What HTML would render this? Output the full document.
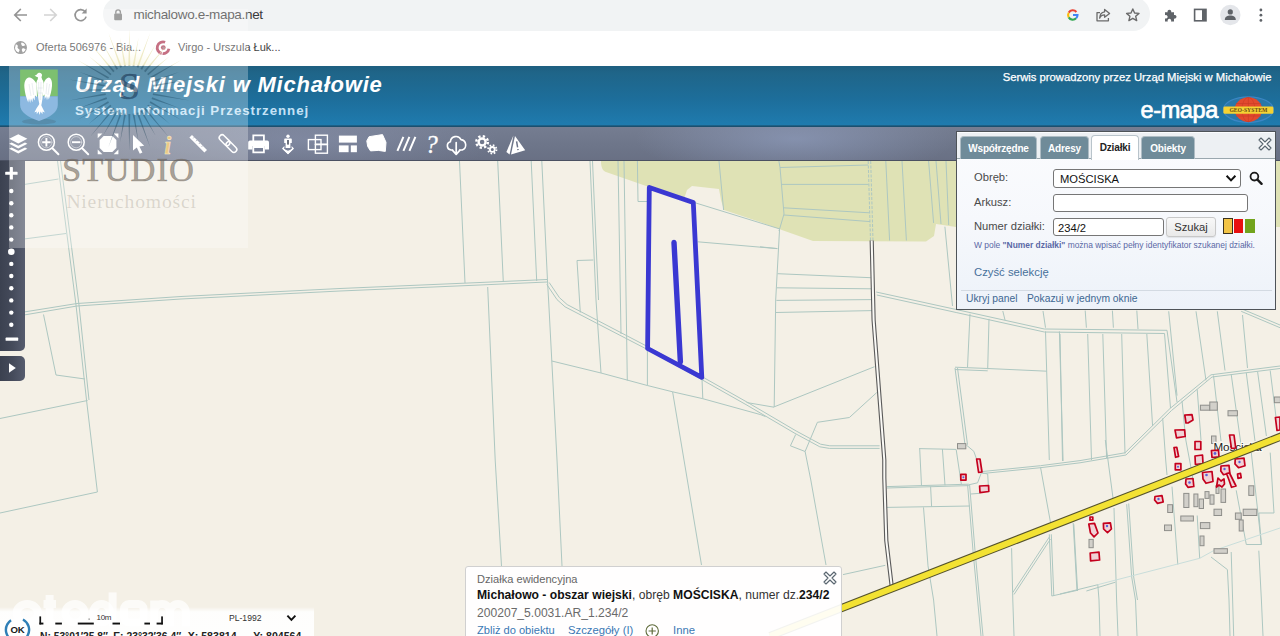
<!DOCTYPE html>
<html lang="pl">
<head>
<meta charset="utf-8">
<title>e-mapa Michałowo</title>
<style>
*{box-sizing:border-box;}
html,body{margin:0;padding:0;}
body{width:1280px;height:636px;overflow:hidden;position:relative;background:#fff;font-family:"Liberation Sans",sans-serif;}
.abs{position:absolute;}
/* browser chrome */
#ctop{left:0;top:0;width:1280px;height:31px;background:#fff;}
#pill{left:103px;top:-3px;width:1047px;height:34px;border-radius:17px;background:#f1f3f4;}
#url{left:133.5px;top:7.3px;font-size:13.5px;color:#3a3a3a;letter-spacing:-0.33px;white-space:nowrap;}
#url b{font-weight:normal;}
#bm{left:0;top:31px;width:1280px;height:35px;background:#fff;}
.bmt{top:41px;font-size:11px;color:#444;white-space:nowrap;}
/* header */
#hdr{left:0;top:65.5px;width:1280px;height:61.5px;background:linear-gradient(180deg,#1e5f80 0%,#1f6589 12%,#1d6e9b 55%,#1f7bae 96%,#1b506f 98.5%,#1b506f 100%);}
#t1{left:75px;top:71.5px;font-size:22px;font-weight:bold;font-style:italic;color:#fff;white-space:nowrap;letter-spacing:0.78px;}
#t2{left:75px;top:103px;font-size:13.3px;font-weight:bold;color:#c4e2f6;white-space:nowrap;letter-spacing:0.95px;}
#srv{right:8.5px;top:71px;-webkit-text-stroke:0.25px #fff;font-size:11.26px;color:#fff;white-space:nowrap;}
#emapa{left:1140.5px;top:96.5px;font-size:23.5px;color:#fff;white-space:nowrap;letter-spacing:-0.38px;-webkit-text-stroke:0.7px #fff;}
/* toolbar */
#tb{left:0;top:127px;width:1280px;height:34px;background:radial-gradient(ellipse 160px 40px at 795px 12px,rgba(150,165,200,0.55),rgba(150,165,200,0) 100%),radial-gradient(ellipse 200px 40px at 300px 14px,rgba(150,160,190,0.4),rgba(150,160,190,0) 100%),linear-gradient(180deg,#757d91 0%,#6d7589 60%,#697084 100%);border-bottom:1.5px solid #4b5162;}
/* map */
#map{left:0;top:161px;width:1280px;height:475px;background:#f4f0e6;}
#zoomctl{left:0;top:161px;width:24.8px;height:189.6px;background:linear-gradient(90deg,#3b4150 0%,#454b5b 50%,#565c6e 100%);border-radius:0 0 5px 0;}
#playctl{left:0;top:356px;width:24.8px;height:24.8px;background:linear-gradient(90deg,#3b4150 0%,#454b5b 50%,#565c6e 100%);border-radius:0 5px 5px 0;}
/* panel */
#panel{left:955.5px;top:131px;width:320.5px;height:178.5px;background:linear-gradient(180deg,#fbfcfe 0%,#f6f8fc 50%,#edf2f9 100%);border:1.5px solid #4e5358;}
.tab{top:135.5px;height:23px;background:#6f8b99;border:1px solid #aebcc4;border-bottom:none;border-radius:4px 4px 0 0;color:#fff;font-size:10px;font-weight:bold;text-align:center;line-height:23px;letter-spacing:-0.15px;}
.tab.act{background:#fff;color:#222;top:135px;height:24.5px;border-color:#b9c4cb;}
.inp{background:#fff;border:1px solid #767676;border-radius:3px;font-size:11.2px;color:#111;white-space:nowrap;}
.lbl{font-size:11.2px;color:#4a4a4a;white-space:nowrap;}
.lnk{font-size:10.3px;color:#3d6792;white-space:nowrap;}
/* popup */
#pop{left:465px;top:566px;width:377px;height:80px;background:rgba(255,255,255,0.93);border:1px solid #d0d0d0;border-radius:3px;}
/* coords */
#coord{left:0;top:606.5px;width:313.5px;height:30px;background:linear-gradient(180deg,rgba(255,255,255,0) 0%,rgba(255,255,255,0.9) 16%,rgba(255,255,255,0.93) 100%);}
/* watermark */
#wm{left:9px;top:9px;width:239px;height:239px;background:rgba(255,255,255,0.28);}
</style>
</head>
<body>
<!-- MAP -->
<div id="map" class="abs">
<svg id="mapsvg" width="1280" height="475" viewBox="0 161 1280 475">
<!-- forest -->
<path d="M601,161 C601,168 603,171 606,172 L649,187 L684,199 L687,190 L692,186 L719,189 L721,200 L724,210 L760,222 L779,229 L813,241 L926,241.5 L934,236 L936,224 L956,227 L1280,227 L1280,161 Z" fill="#dfe2b5"/>
<g fill="none" stroke="#adc7c1" stroke-width="1">
<!-- far left -->
<path d="M57.5,161 L76,305 L86.5,400 L97.4,492 L0,513"/>
<path d="M60.5,161 L79,305 L89,400"/>
<path d="M24,315 L77,306 L181,299 L340,291 L480,285 L547,282"/>
<path d="M24,312 L77,303.5 L181,296.5 L340,288.5 L480,282.5 L547,279.5"/>
<path d="M24,184.5 L58.5,179"/>
<path d="M24,239 L66,233.5"/>
<path d="M459.5,161 L465,283"/>
<path d="M43.5,314.5 L56,375 L85,379"/>
<path d="M0,418.5 L87.5,400.5"/>
<!-- middle-left verticals -->
<path d="M497.7,161 L503.3,282"/>
<path d="M531.2,161 L536.7,281"/>
<path d="M541.8,161 L547.5,281 L548.6,300 L557,460"/>
<path d="M590,161 L596,300 L601,373"/>
<path d="M592.5,161 L598.5,300"/>
<path d="M618,161 L621,334"/>
<path d="M624,161 L627.3,380.5"/>
<path d="M637.4,161 L638,201.5 L647.5,201.5"/>
<path d="M719,161 L723.6,210"/>
<path d="M487.7,287 L495.2,460 L501.5,566"/>
<path d="M557,460 L562,566"/>
<path d="M577,260.5 L593.3,260"/>
<path d="M577,260.5 L580.3,312.5"/>
<!-- diagonal double road through parcel -->
<path d="M546.8,284.5 L557,299.6 L565,306.8 L646.8,349.2 L701.4,379.4 L746,404.6 L795,433.4 L819.8,446.8 L829.4,448.4 L879.6,448.4"/>
<path d="M549.2,282.5 L559.4,297.6 L567.2,304.6 L648,346.8 L702.6,377 L747.2,402.2 L796.2,431 L820.6,444.2 L829.8,445.8 L879.6,445.8"/>
<path d="M551.8,361 L601,373 L647.4,385.5 L672.6,391.8 L702.8,398.7 L760.8,414.7 L765.5,416.6"/>
<path d="M647.4,349 L647.4,385.5"/>
<path d="M702,379 L702.8,398.6"/>
<path d="M672.6,391.8 L684,460 L701.5,565"/>
<!-- right of parcel -->
<path d="M691,201.5 L780,229"/>
<path d="M697.7,241.8 L777,248.6"/>
<path d="M779.5,230 L775.7,300 L774.2,407"/>
<path d="M746.6,402.5 L774,407.2"/>
<path d="M760,246.8 L777.6,248.6"/>
<path d="M777.6,273.7 L870.7,277.7"/>
<path d="M777,287.8 L871,288.8"/>
<path d="M776.4,300.4 L871.5,299.6"/>
<path d="M775.6,312.5 L872,310.6"/>
<path d="M773.8,407 L874.5,366.7"/>
<!-- forest internal -->
<path d="M778.9,161 L780,167.5 L784,214 L779,231"/>
<path d="M780,167.5 L868.2,165"/>
<path d="M782,184.4 L868.5,184.4"/>
<path d="M783.5,207.8 L869.5,212.8"/>
<path d="M784,215 L870,221.6"/>
<path d="M868.2,161 L870.5,240.5" stroke-dasharray="3 1.5"/>
<path d="M870.7,161 L873,240.5" stroke-dasharray="3 1.5"/>
<path d="M885.8,161 L889.6,240.5"/>
<path d="M902,161 L906.4,240.5"/>
<path d="M928.6,161 L933.6,223"/>
<path d="M936,161 L941,224"/>
<path d="M946,161 L948.7,225"/>
<path d="M944.9,226.7 L952.5,306"/>
<!-- teal double road to the east -->
<path d="M876.2,292 L956.2,309.5 L1044.3,329 L1167,330.3 L1177,402"/>
<path d="M876.8,295 L956.2,312.5 L1044.3,332 L1164.5,333.5 L1170.5,408"/>
<!-- lower-left of black road -->
<path d="M817.4,422.3 L849.4,417.5 L876.8,392.5"/>
<path d="M817.4,422.3 L805.1,451.5 L810.8,480 L826,565"/>
<path d="M795.7,434.5 L790.4,445.8 L805.1,451.5"/>
<path d="M843,574.6 L885.3,565.3"/>
<!-- east block -->
<path d="M970,313.8 L967.5,367.4"/>
<path d="M989,318.9 L987.7,369.2"/>
<path d="M955,367.2 L987.7,368.5 L1046.8,371.2"/>
<path d="M955,369.5 L987.7,370.8"/>
<path d="M955,368 L965,444.7"/>
<path d="M957.5,368 L967.5,444.7"/>
<path d="M1045.5,331.4 L1049.3,460"/>
<path d="M1059.4,331.4 L1063.1,461"/>
<path d="M1002.8,311 L1005,320"/>
<path d="M1043,311 L1045.5,327.7"/>
<path d="M919,448.6 L956.2,449.4"/>
<path d="M919.7,448.8 L921.5,485.8"/>
<path d="M942.4,449 L945,485.3"/>
<path d="M956.2,449.6 L961.3,484"/>
<path d="M887,486.6 L968.8,484.2"/>
<path d="M887,488 L968.8,485.6"/>
<path d="M887,507.4 L970,506"/>
<path d="M930.6,486.5 L931.6,506.7"/>
<path d="M967.6,484.8 L973,550.7 L977.6,600 L981,636"/>
<path d="M969.6,484.8 L975,550.7 L979.6,600 L983,636"/>
<path d="M923.5,507.4 L928,565.8 L933.6,600 L937,636"/>
<path d="M966.3,445 L973.8,451.3 L981.4,472.7 L987.7,474 L988.4,486.5"/>
<path d="M981.4,472.7 L977.6,482.8 L968.8,484.8"/>
<path d="M970.8,494 L980,493.3"/>
<path d="M982.6,471.5 L1040.5,465.7 L1080,460.6 L1125,452.8 L1170,408.5 L1211,374.8 L1280,366"/>
<path d="M982.6,473.5 L1040.5,467.7 L1080,462.8 L1126,455 L1171.5,410.5 L1212,377 L1280,368.5"/>
<path d="M1040.5,467.2 L1050.6,523"/>
<path d="M1011.6,548.2 L1012.8,600 L1014,636"/>
<path d="M1049.3,534.3 L1051.8,596"/>
<path d="M1051.3,534.3 L1053.8,596"/>
<path d="M1049.3,537 L1012.8,592.5"/>
<path d="M1050.5,539 L1014,594.5"/>
<path d="M1073.2,523 L1077,591"/>
<path d="M1051.8,596 L1077,590.4"/>
<!-- NE lines above village -->
<path d="M1241.2,311.3 L1280,327.7"/>
<path d="M1242,309 L1280,325"/>
<path d="M1085.2,310.6 L1086.4,327.7"/>
<path d="M1112.4,310.6 L1113.4,327.7"/>
<path d="M1136.8,310.6 L1138,329"/>
<path d="M1060,334 L1062.5,461"/>
<path d="M1087.7,334 L1091.5,460"/>
<path d="M1102.8,334 L1106.6,458"/>
<path d="M1121.7,334 L1125,453.5"/>
<path d="M1146.8,334 L1152.6,426"/>
<path d="M1168.7,311.3 L1177,395.6"/>
<path d="M1196,311.3 L1206,380.5"/>
<path d="M1217.3,311.3 L1225,370.5"/>
<path d="M1242.5,315 L1247.5,368"/>
<!-- village plots -->
<path d="M1162.7,418.3 L1165.7,460 L1167,475"/>
<path d="M1182,400.7 L1185.8,440 L1191,467.7 L1193.4,482.8"/>
<path d="M1197.2,389.4 L1201,440"/>
<path d="M1213.5,375.5 L1221,441"/>
<path d="M1231.2,374.3 L1241.2,446"/>
<path d="M1246.3,373 L1255,441"/>
<path d="M1257.6,371.7 L1266.4,436"/>
<path d="M1270.2,370.5 L1276.5,421"/>
<path d="M1105.3,440 L1113,498"/>
<path d="M1114,508 L1116.6,600 L1118,636"/>
<path d="M1172,486.6 L1177.8,564.6"/>
<path d="M1197.2,515.5 L1199.7,558.3"/>
<path d="M1126.7,504.2 L1131.7,577 L1135.5,600 L1137,636"/>
<path d="M1128.7,503.5 L1133.7,577 L1137.5,600"/>
<path d="M1073.8,524.3 L1077.6,591"/>
<path d="M1060,594 L1097.8,584.7 L1099,600 L1100,636"/>
<path d="M1086.4,591 L1115.4,582.2"/>
<path d="M1211,557 L1227.4,569.6 L1229,600 L1230,636"/>
<path d="M1231.2,552 L1233.7,636"/>
<path d="M1246.3,544.5 L1261.4,544.5 L1258.8,513 L1274,513"/>
<path d="M1246.3,544.5 L1236.2,490.3"/>
<path d="M1258.8,550.7 L1261.4,600 L1263,636"/>
<path d="M1251.3,452.6 L1261.4,544.5"/>
<path d="M1270.2,452.6 L1274,513"/>
</g>
<path d="M1097.8,584.7 L1199.7,558.3 L1213.5,550.7 L1280,528" fill="none" stroke="#c9dedb" stroke-width="1"/>
<!-- black double road -->
<g fill="none">
<path d="M871.7,240.5 L873.6,320 L884.3,460 L884.3,477.7 L886.3,540.6 L891.8,587" stroke="#5a5a5a" stroke-width="4.2"/>
<path d="M871.7,240.5 L873.6,320 L884.3,460 L884.3,477.7 L886.3,540.6 L891.8,587" stroke="#fbfaf6" stroke-width="2"/>
</g>
<!-- grey buildings -->
<g fill="#d2d0ca" stroke="#8e8e8a" stroke-width="1">
<rect x="957.5" y="443.6" width="8.3" height="5.2"/>
<rect x="1200.4" y="405.2" width="9.4" height="5"/>
<rect x="1209.8" y="402" width="7.5" height="8.2"/>
<rect x="1228" y="410.7" width="9.4" height="5.1"/>
<rect x="1274.4" y="397" width="6" height="5.7"/>
<rect x="1211.5" y="436" width="4.5" height="7.5"/>
<rect x="1167.7" y="504.7" width="4.8" height="7.8"/>
<rect x="1183.8" y="493.4" width="5.1" height="14.1"/>
<rect x="1193.9" y="494" width="4" height="12.7"/>
<rect x="1199.2" y="499" width="4.3" height="9.5"/>
<rect x="1205" y="491.6" width="4" height="6.8"/>
<rect x="1210" y="494.9" width="4" height="9.3"/>
<rect x="1216" y="485.8" width="3" height="7.6"/>
<rect x="1221" y="489" width="4.6" height="13.4"/>
<rect x="1248.8" y="485.8" width="5" height="9.6"/>
<rect x="1214" y="509.2" width="7.6" height="6.3"/>
<rect x="1180.8" y="516" width="12.6" height="5"/>
<rect x="1164.5" y="525" width="7" height="5.6"/>
<rect x="1200.4" y="522.6" width="9.4" height="6"/>
<rect x="1200" y="536" width="4" height="9.7"/>
<rect x="1235.4" y="513" width="5.8" height="6.3"/>
<rect x="1243.2" y="509.2" width="13.6" height="6.3"/>
<rect x="1239.2" y="520" width="4" height="11"/>
<rect x="1214" y="548.7" width="13.4" height="4.6"/>
<rect x="1089" y="539.4" width="4.2" height="8.3"/>
</g>
<text x="1213.4" y="450.8" font-family="Liberation Sans, sans-serif" font-size="11.6" fill="#222" stroke="#fbfaf4" stroke-width="2.4" paint-order="stroke" stroke-linejoin="round">Mościska</text>
<!-- red buildings -->
<g fill="#f0d2d6" stroke="#c4001d" stroke-width="1.7" stroke-linejoin="round">
<path d="M976.6,459 L980,459 L982,472 L978.6,472.5 Z"/>
<rect x="960.8" y="474.3" width="5.2" height="5.8"/>
<path d="M979.6,486 L988.6,485.5 L988.8,491.5 L980,492.6 Z"/>
<path d="M1184.8,415 L1192,414.6 L1193,420 L1188,423 L1186,423 Z"/>
<path d="M1175,430 L1184.6,429.8 L1185.2,436.5 L1176.5,437.8 Z"/>
<rect x="1195" y="441.5" width="5.8" height="8"/>
<path d="M1174,447.5 L1176.8,447.3 L1178.6,456.5 L1175.6,457.3 Z"/>
<path d="M1229.5,435 L1234,435 L1235.7,448 L1231.5,448.5 Z"/>
<path d="M1275.4,417.5 L1280,417 L1280,430 L1277,430.5 Z"/>
<rect x="1175.3" y="463.6" width="5.6" height="6.2"/>
<path d="M1195,456 L1202.5,455 L1203,463.5 L1195.4,464.5 Z"/>
<path d="M1211.4,450.5 L1218.5,450.2 L1219,456.8 L1212,457.5 Z"/>
<path d="M1186,479 L1193,478.5 L1193.8,486.5 L1188,487.3 L1185.6,484 Z"/>
<path d="M1202.5,472.5 L1212,471.5 L1213,481.5 L1206,483.3 L1203,479 Z"/>
<path d="M1221,466 L1229,465.3 L1229.8,473 L1223.5,474.7 L1220.8,471 Z"/>
<path d="M1235.2,459 L1244,458.2 L1245,465.8 L1238.5,467.7 L1235,464 Z"/>
<path d="M1218,478 L1221,481 L1224,479 L1224.5,484 L1222,487 L1219,485 L1216.5,487 Z"/>
<path d="M1226.5,473.5 L1229.5,473 L1236,486 L1231.5,487.3 L1229,480 Z"/>
<path d="M1237.5,474 L1240.5,473.4 L1241.2,477.6 L1238,478.3 Z"/>
<path d="M1155,496.5 L1162,495.6 L1163.2,502 L1157.5,503.4 L1154.6,500 Z"/>
<path d="M1088.8,524 L1094.5,523.4 L1098,533 L1094,536.8 L1090.5,533 Z"/>
<path d="M1103.4,523.4 L1110.4,522.8 L1111.4,529 L1107.5,532.6 L1103.6,529 Z"/>
<path d="M1090.2,553 L1099,552.2 L1099.6,560 L1090.6,560.8 Z"/>
<rect x="1090" y="517" width="2.8" height="3.2"/>
</g>
<g fill="#5a62d8">
<circle cx="963.4" cy="477.2" r="1"/><circle cx="1178" cy="466.7" r="1"/><circle cx="1215" cy="453.5" r="1.4"/><circle cx="1189.5" cy="482.5" r="1.3"/><circle cx="1206.5" cy="475" r="1.3"/><circle cx="1224.5" cy="469" r="1.2"/><circle cx="1239.5" cy="462" r="1.2"/><circle cx="1158.5" cy="499" r="1.2"/><circle cx="1107" cy="526" r="1.2"/>
</g>
<g fill="none">
<path d="M770,636 L1285,435" stroke="#55532c" stroke-width="8.2"/>
<path d="M770,636 L1285,435" stroke="#f3e233" stroke-width="6"/>
</g>
<!-- selected parcel -->
<g fill="none" stroke="#3a38d2" stroke-width="4.8" stroke-linejoin="round" stroke-linecap="round">
<path d="M649.3,187.5 L693.3,202.5 L701.8,377.3 L647.6,348.5 Z"/>
<path d="M674,242.5 L680.4,362" stroke-width="5.4"/>
</g>

</svg>
</div>

<!-- BROWSER CHROME -->
<div id="ctop" class="abs"></div>
<div id="pill" class="abs"></div>
<div id="url" class="abs">michalowo.e-mapa<b>.net</b></div>
<div id="bm" class="abs"></div>
<div class="abs bmt" style="left:36px">Oferta 506976 - Bia...</div>
<div class="abs bmt" style="left:178px">Virgo - Urszula Łuk...</div>
<svg class="abs" style="left:0;top:0" width="1280" height="66">
<g fill="none" stroke="#6b6b6b" stroke-width="1.7" stroke-linecap="butt" stroke-linejoin="miter">
<path d="M27,15 H15.5 M20.8,9 L14.8,15 L20.8,21"/>
<path d="M44,15 H55.5 M50.2,9 L56.2,15 L50.2,21" stroke="#c4c4c4"/>
<path d="M85.2,11.8 A5.6,5.6 0 1 0 86.1,16.6" />
</g>
<path d="M86.6,8.6 V13.6 H81.6 Z" fill="#6b6b6b"/>
<!-- lock -->
<rect x="114.2" y="13.6" width="7.8" height="6.6" rx="1" fill="#7a7a7a"/>
<path d="M115.8,13.8 V12.2 A2.3,2.3 0 0 1 120.4,12.2 V13.8" fill="none" stroke="#7a7a7a" stroke-width="1.4"/>
<!-- globe bookmark icon -->
<circle cx="20.5" cy="47.6" r="6.5" fill="#7c7c7c"/>
<path d="M15.8,44.2 C17.5,44.6 18.3,45.8 17.6,47 C17,48.2 18.6,48.6 19.4,49.6 C20,50.6 19,51.6 18.4,52.6 C16.6,51.8 15.2,50 15,48 Z M21.5,42.4 C23,42.6 24.6,43.6 25.4,45.2 C24.4,45.4 23.6,46.2 22.6,46 C21.6,45.8 21.8,44.6 21,44 Z M22.6,48.2 C23.8,48 25.2,48.6 25.6,49.6 C25,51 24,52 22.8,52.6 C22.6,51.4 21.6,50.6 21.8,49.4 Z" fill="#fff"/>
<!-- virgo icon -->
<path d="M168.91,48.77 A5.9,5.9 0 1 1 165.12,42.21" fill="none" stroke="#b03a54" stroke-width="2.8"/>
<path d="M162.6,50.6 L161.8,55.6" stroke="#fff" stroke-width="1" fill="none"/>
<circle cx="163.3" cy="47.6" r="2.4" fill="#b03a54"/>
<circle cx="163.3" cy="47.6" r="1.1" fill="#8c7c80"/>
<!-- right icons -->
<g transform="translate(1072.8 15)" fill="none" stroke-width="2.1">
<path d="M-4.07,-2.35 A4.7,4.7 0 0 1 3.6,-3.02" stroke="#ea4335"/>
<path d="M-4.07,2.35 A4.7,4.7 0 0 1 -4.07,-2.35" stroke="#fbbc05"/>
<path d="M3.32,3.32 A4.7,4.7 0 0 1 -4.07,2.35" stroke="#34a853"/>
<path d="M0.2,0 H4.7 A4.7,4.7 0 0 1 3.32,3.32" stroke="#4285f4"/>
</g>
<g fill="none" stroke="#6b6b6b" stroke-width="1.3" stroke-linejoin="round">
<path d="M1099.5,13 V20.6 H1108.5 V17.5 M1099.5,13 H1097 M1097,13 V20.6 H1099.5" stroke-width="0"/>
<path d="M1100,12.6 H1097 V20.8 H1108.4 V18"/>
<path d="M1104.6,9.4 L1109.6,13.4 L1104.6,17.2 V14.8 C1102,14.8 1100.4,16 1099.6,18.2 C1099.8,14.6 1101.6,12.2 1104.6,11.8 Z"/>
<path d="M1132.8,9 L1134.6,13 L1139,13.4 L1135.7,16.3 L1136.7,20.6 L1132.8,18.3 L1128.9,20.6 L1129.9,16.3 L1126.6,13.4 L1131,13 Z" stroke-width="1.4"/>
</g>
<!-- puzzle -->
<path d="M1165,12.2 H1167.6 A1.9,1.9 0 1 1 1171.2,12.2 H1174 V15 A1.9,1.9 0 1 1 1174,18.6 V21.4 H1171 A1.8,1.8 0 1 0 1167.8,21.4 H1165 V18.4 A1.8,1.8 0 1 0 1165,15.2 Z" fill="#5f6368"/>
<!-- side panel -->
<rect x="1194.6" y="9.4" width="11.4" height="11.4" fill="none" stroke="#5f6368" stroke-width="1.6"/>
<rect x="1202" y="9.4" width="4" height="11.4" fill="#5f6368"/>
<!-- profile -->
<circle cx="1230.3" cy="15" r="10.2" fill="#e4e6ea"/>
<circle cx="1230.3" cy="11.9" r="2.6" fill="#5f6368"/>
<path d="M1224.8,20 C1224.8,16.6 1227.6,15.6 1230.3,15.6 C1233,15.6 1235.8,16.6 1235.8,20 Z" fill="#5f6368"/>
<!-- menu -->
<circle cx="1260.9" cy="10" r="1.4" fill="#5f6368"/><circle cx="1260.9" cy="15.2" r="1.4" fill="#5f6368"/><circle cx="1260.9" cy="20.4" r="1.4" fill="#5f6368"/>

</svg>

<!-- HEADER -->
<div id="hdr" class="abs"></div>
<div id="t1" class="abs">Urząd Miejski w Michałowie</div>
<div id="t2" class="abs">System Informacji Przestrzennej</div>
<div id="srv" class="abs">Serwis prowadzony przez Urząd Miejski w Michałowie</div>
<div id="emapa" class="abs">e-mapa</div>
<svg class="abs" style="left:0;top:66px" width="1280" height="60" viewBox="0 66 1280 60">
<defs>
<clipPath id="shieldclip"><path d="M20.1,69.5 H57.8 V105 C57.8,112 50,117.5 39,121 C28,117.5 20.1,112 20.1,105 Z"/></clipPath>
</defs>
<ellipse cx="39" cy="121.5" rx="17" ry="3" fill="#0a3350" opacity="0.35"/>
<g clip-path="url(#shieldclip)">
<rect x="20" y="69" width="38" height="27.3" fill="#4ba83a"/>
<rect x="20" y="96.3" width="38" height="26" fill="#619fd6"/>
</g>
<!-- eagle -->
<g fill="#fff">
<path d="M36.8,74.6 C37.6,72.8 40,72.2 41.2,73.4 C42.4,74.4 42.2,76 41.4,77 L42.2,79.4 C43.6,81 44,83.4 43.4,85.6 L43,92 L42.4,99 L41.6,104 L40.4,108 L39.2,103.6 L38.2,98 L37.4,92 L36.6,85.6 C36,83 36.6,80.6 37.8,79.2 L38,77.2 C36.6,77 35.4,76.4 34.6,75.6 C35.4,75.4 36.2,75.2 36.8,74.6 Z"/>
<path d="M36.6,84 C34.6,80 31.6,77.4 28.6,77.6 C25.4,78.6 24,82.6 24.4,87.4 C24.8,92.6 26.2,97.6 28.2,102.4 L29,98.4 L30.2,103 L31,98.6 L32.4,102.2 L33,97.4 L34.6,100.6 L35,95.4 L37,97.2 Z"/>
<path d="M43.4,84 C44.6,80.6 46.4,78 48.6,77.6 C51.2,78 52.4,81.6 52,86 C51.6,90.6 50.4,95.4 48.8,99.6 L48,96.4 L47,100.2 L46.2,96.2 L44.8,99 L44.4,94.6 L42.8,96.4 Z"/>
<path d="M39.4,104 L36.4,108.6 L34.4,112.6 L36.6,111.4 L36.8,114.2 L38.6,111.4 L39.6,115 L40.6,111.4 L42.4,114.2 L42.6,111.4 L44.8,112.6 L42.8,108.6 L40.6,104 Z"/>
</g>
<g fill="none" stroke="#b9c7d2" stroke-width="0.5" opacity="0.8">
<path d="M38.6,82 L39,100 M41,82 L40.6,100 M37.4,88 L42.6,88 M37.8,93 L42.4,93 M29,84 L31,96 M32,83 L33.6,95 M47,83 L46,94 M49.6,84 L48,95"/>
</g>
<!-- geo-system logo -->
<ellipse cx="1248.4" cy="109.6" rx="25" ry="12.8" fill="#2a78a8" stroke="#3b86c4" stroke-width="1.2"/>
<ellipse cx="1248.4" cy="109.6" rx="13.8" ry="12.3" fill="#e2492e"/>
<g fill="none" stroke="#c93a25" stroke-width="0.6"><ellipse cx="1248.4" cy="109.6" rx="6.5" ry="12.3"/><path d="M1236,103.5 H1261 M1236,116 H1261 M1248.4,97.3 V122"/></g>
<rect x="1223.4" y="106.6" width="50" height="7.2" rx="1.4" fill="#f4d233"/>
<text x="1248.4" y="112.2" text-anchor="middle" font-family="Liberation Serif, serif" font-weight="bold" font-size="5.4" fill="#6a4a12" textLength="38" lengthAdjust="spacingAndGlyphs">GEO-SYSTEM</text>

</svg>

<!-- TOOLBAR -->
<div id="tb" class="abs"></div>
<svg class="abs" style="left:0;top:126px" width="560" height="35" viewBox="0 126 560 35">
<g fill="#fff" stroke="none">
<!-- layers -->
<path d="M18.3,134.2 L27.4,138.8 L18.3,143.4 L9.2,138.8 Z"/>
<path d="M11.6,142.4 L18.3,145.8 L25,142.4 L27.4,143.8 L18.3,148.4 L9.2,143.8 Z"/>
<path d="M11.6,147.4 L18.3,150.8 L25,147.4 L27.4,148.8 L18.3,153.4 L9.2,148.8 Z"/>
</g>
<!-- zoom in / out -->
<g fill="none" stroke="#fff" stroke-width="1.5" stroke-linecap="round">
<circle cx="46.4" cy="142.2" r="8"/>
<path d="M52.4,148.2 L58.4,154.2" stroke-width="2"/>
<path d="M42.2,142.2 H50.6 M46.4,138 V146.4" stroke-width="1.9" stroke-linecap="butt"/>
<circle cx="46.4" cy="142.2" r="5.6" stroke-width="0.8" opacity="0.55"/>
<circle cx="76.2" cy="142.2" r="8"/>
<path d="M82.2,148.2 L88.2,154.2" stroke-width="2"/>
<path d="M72,142.2 H80.4" stroke-width="1.9" stroke-linecap="butt"/>
<circle cx="76.2" cy="142.2" r="5.6" stroke-width="0.8" opacity="0.55"/>
</g>
<!-- full extent -->
<g fill="#fff">
<path d="M103.6,136 H112.4 L116.4,140 V148 L112.4,152 H103.6 L99.6,148 V140 Z"/>
<path d="M97.7,133.6 H102.4 L97.7,138.3 Z M118.4,133.6 V138.3 L113.7,133.6 Z M97.7,154.2 V149.5 L102.4,154.2 Z M118.4,154.2 H113.7 L118.4,149.5 Z"/>
<!-- pointer -->
<path d="M133,135 L133,150.6 L136.8,147.4 L139.8,153.8 L142.4,152.6 L139.4,146.4 L144.2,145.8 Z"/>
</g>
<!-- info i -->
<text x="164.3" y="153.6" font-family="Liberation Serif, serif" font-style="italic" font-weight="bold" font-size="25" fill="#e4b556" stroke="#f6e6bd" stroke-width="0.5">i</text>
<!-- ruler -->
<g>
<path d="M189.4,137.6 L192,135 L207,150 L204.4,152.6 Z" fill="#fff"/>
<path d="M193.2,138.4 l1.5,-1.5 M196,141.2 l1.5,-1.5 M198.8,144 l1.5,-1.5 M201.6,146.8 l1.5,-1.5" stroke="#8a90a2" stroke-width="0.9" fill="none"/>
</g>
<!-- link -->
<g fill="none" stroke="#fff" stroke-width="1.5">
<rect x="-6.4" y="-2.9" width="12.8" height="5.8" rx="2.9" transform="translate(224.6 140.2) rotate(45)"/>
<rect x="-6.4" y="-2.9" width="12.8" height="5.8" rx="2.9" transform="translate(231.4 147) rotate(45)"/>
</g>
<!-- printer -->
<g fill="#fff">
<path d="M252.4,134.5 H264.8 V142 H252.4 Z M254.2,136.2 V141 H263 V136.2 Z" fill-rule="evenodd"/>
<path d="M250,140.6 H267.2 A1.8,1.8 0 0 1 269,142.4 V149.6 H264.8 V146 H252.4 V149.6 H248.2 V142.4 A1.8,1.8 0 0 1 250,140.6 Z"/>
<path d="M252.4,146 H264.8 V153.3 H252.4 Z M254.2,148 V151.6 H263 V148 Z" fill-rule="evenodd"/>
</g>
<!-- pegman -->
<g fill="#fff">
<circle cx="288" cy="136.2" r="1.7"/>
<path d="M285,138.6 H291 A0.8,0.8 0 0 1 291.8,139.4 V143 H290.4 V148 H285.6 V143 H284.2 V139.4 A0.8,0.8 0 0 1 285,138.6 Z"/>
<path d="M284.4,146 L282,148.6 L288,154.2 L294,148.6 L291.6,146 L291.6,147.4 L292,148.6 L288,152 L284,148.6 L284.4,147.4 Z"/>
<path d="M282,148.6 L288,154.2 L294,148.6 L288,150.8 Z"/>
</g>
<g fill="#4a5162"><rect x="287.2" y="140" width="1.6" height="4.6"/></g>
<!-- overlap squares -->
<g fill="none" stroke="#fff" stroke-width="1.4">
<rect x="315.4" y="135.2" width="12" height="9"/>
<rect x="308.4" y="139.6" width="12.6" height="10"/>
<rect x="315.4" y="144.6" width="12" height="8.6"/>
</g>
<!-- layout -->
<g fill="#fff">
<rect x="338.9" y="135.6" width="18" height="7"/>
<rect x="338.9" y="145.4" width="9.7" height="6.8"/>
<rect x="350.8" y="145.4" width="6.1" height="6.8"/>
</g>
<!-- polygon -->
<path d="M366.8,140.9 L369.1,136.7 L382.5,134.6 L386,142.3 L385.3,151.4 L378.3,150.4 L370.5,150.9 L367.7,146.5 Z" fill="#fff" stroke="#fff" stroke-width="1" stroke-linejoin="round"/>
<!-- slashes -->
<g fill="none" stroke="#fff" stroke-width="2">
<path d="M397.4,150.8 L403.4,136.8 M403.4,150.8 L409.4,136.8 M409.4,150.8 L415.4,136.8"/>
</g>
<!-- question -->
<text x="425.2" y="153.2" font-family="Liberation Serif, serif" font-style="italic" font-size="25" fill="#fff" stroke="#fff" stroke-width="0.3">?</text>
<!-- cloud download -->
<g fill="none" stroke="#fff" stroke-width="1.6" stroke-linejoin="round" stroke-linecap="round">
<path d="M452.6,150 H451 A4.2,4.2 0 0 1 450.4,141.8 A5.6,5.6 0 0 1 461,139.6 A5.4,5.4 0 0 1 462.2,150 H459.6"/>
<path d="M456.2,142.6 V153.6 M452.6,150.4 L456.2,154.4 L459.8,150.4" stroke-width="1.7"/>
</g>
<!-- gears -->
<g fill="none" stroke="#fff">
<circle cx="482.1" cy="142" r="3.5" stroke-width="2.4"/>
<circle cx="482.1" cy="142" r="5.8" stroke-width="2.4" stroke-dasharray="2.3 2.25"/>
<circle cx="492.3" cy="149.4" r="2.4" stroke-width="1.8"/>
<circle cx="492.3" cy="149.4" r="4.2" stroke-width="1.8" stroke-dasharray="1.65 1.65"/>
</g>
<!-- warning -->
<g>
<path d="M513.4,135.4 L506.4,152 L509.6,154.4 Z" fill="#fff"/>
<path d="M515,136 L525.2,150.2 L511,154.4 Z" fill="#fff"/>
<path d="M516.6,141.4 L517.6,147.4 M517.9,149 L518.1,150.2" stroke="#6b7287" stroke-width="1.5" fill="none"/>
</g>

</svg>

<!-- ZOOM CONTROL -->
<div id="zoomctl" class="abs"></div>
<div id="playctl" class="abs"></div>
<svg class="abs" style="left:0;top:161px" width="30" height="230" viewBox="0 161 30 230">
<g fill="#fff">
<rect x="5.2" y="171.8" width="12.4" height="3" rx="0.6"/><rect x="9.9" y="167.1" width="3" height="12.4" rx="0.6"/>
<circle cx="11.3" cy="191" r="2.2"/><circle cx="11.3" cy="203.2" r="2.2"/><circle cx="11.3" cy="215.3" r="2.2"/><circle cx="11.3" cy="227.4" r="2.2"/><circle cx="11.3" cy="239.6" r="2.2"/>
<circle cx="11.3" cy="251.8" r="3.3"/>
<circle cx="11.3" cy="263.9" r="2.2"/><circle cx="11.3" cy="276" r="2.2"/><circle cx="11.3" cy="288.2" r="2.2"/><circle cx="11.3" cy="300.4" r="2.2"/><circle cx="11.3" cy="312.6" r="2.2"/><circle cx="11.3" cy="324.8" r="2.2"/>
<rect x="5.6" y="337.6" width="12.6" height="3.2" rx="0.6"/>
<path d="M9,363.2 L15.8,368 L9,372.8 Z"/>
</g>

</svg>

<!-- PANEL -->
<div id="panel" class="abs"></div>
<div class="abs" style="left:957px;top:133px;width:318px;height:26px;background:#edf0f3;"></div>
<div class="abs" style="left:957px;top:158px;width:318px;height:1px;background:#9aa7ae;"></div>
<div class="abs tab" style="left:960px;width:77px;">Współrzędne</div>
<div class="abs tab" style="left:1040px;width:49px;">Adresy</div>
<div class="abs tab" style="left:1141px;width:54px;">Obiekty</div>
<div class="abs tab act" style="left:1091px;width:48px;">Działki</div>
<svg class="abs" style="left:1258px;top:137px" width="14" height="14" viewBox="0 0 14 14"><path d="M3,1 L7,5 L11,1 L13,3 L9,7 L13,11 L11,13 L7,9 L3,13 L1,11 L5,7 L1,3 Z" fill="#fff" stroke="#5a6670" stroke-width="1.1" stroke-linejoin="round"/></svg>
<div class="abs lbl" style="left:974px;top:171px;">Obręb:</div>
<div class="abs inp" style="left:1053px;top:169px;width:188px;height:19px;"><span style="position:absolute;left:6px;top:3px;">MOŚCISKA</span></div>
<svg class="abs" style="left:1225px;top:174px" width="12" height="9" viewBox="0 0 12 9"><path d="M1.6,1.8 L6,6.4 L10.4,1.8" fill="none" stroke="#111" stroke-width="2"/></svg>
<svg class="abs" style="left:1248px;top:170px" width="16" height="16" viewBox="0 0 16 16"><circle cx="6.4" cy="6.6" r="3.9" fill="none" stroke="#1a1a1a" stroke-width="1.8"/><path d="M9.4,9.6 L13.6,13.8" stroke="#1a1a1a" stroke-width="2.4" stroke-linecap="round"/></svg>
<div class="abs lbl" style="left:974px;top:196px;">Arkusz:</div>
<div class="abs inp" style="left:1053px;top:193.5px;width:195px;height:18px;"></div>
<div class="abs lbl" style="left:974px;top:220px;">Numer działki:</div>
<div class="abs inp" style="left:1053px;top:218px;width:111px;height:18px;"><span style="position:absolute;left:4px;top:3px;">234/2</span></div>
<div class="abs" style="left:1166px;top:216.5px;width:50px;height:20px;border:1px solid #c8c8c8;border-radius:3px;background:linear-gradient(#f8f8f8,#e9e9e9);font-size:11.2px;color:#333;text-align:center;line-height:18px;box-shadow:0 1px 1px rgba(0,0,0,0.08);">Szukaj</div>
<div class="abs" style="left:1222.5px;top:218px;width:10px;height:16px;background:#f2c446;border:1.5px solid #3a3220;"></div>
<div class="abs" style="left:1233.7px;top:219px;width:9.4px;height:14px;background:#e81010;"></div>
<div class="abs" style="left:1245.2px;top:219px;width:9.4px;height:14px;background:#72a41c;"></div>
<div class="abs" style="left:974px;top:240px;font-size:8.43px;color:#5a68a6;white-space:nowrap;">W pole <b>"Numer działki"</b> można wpisać pełny identyfikator szukanej działki.</div>
<div class="abs" style="left:974px;top:266px;font-size:11.3px;color:#47709a;white-space:nowrap;">Czyść selekcję</div>
<div class="abs" style="left:961px;top:290px;width:311px;height:1px;background:#d3dae2;"></div>
<div class="abs lnk" style="left:966px;top:293px;">Ukryj panel</div>
<div class="abs lnk" style="left:1027px;top:293px;">Pokazuj w jednym oknie</div>


<!-- POPUP -->
<div id="pop" class="abs"></div>
<div class="abs" id="p1" style="left:477px;top:572.5px;font-size:11.1px;color:#666;white-space:nowrap;">Działka ewidencyjna</div>
<div class="abs" id="p2" style="left:477px;top:588px;font-size:12.14px;color:#333;white-space:nowrap;"><b style="color:#111">Michałowo - obszar wiejski</b>, obręb <b style="color:#111">MOŚCISKA</b>, numer dz.<b style="color:#111">234/2</b></div>
<div class="abs" id="p3" style="left:477px;top:605.5px;font-size:12.1px;color:#6a6a6a;white-space:nowrap;">200207_5.0031.AR_1.234/2</div>
<div class="abs" id="p4" style="left:477px;top:623.5px;font-size:11.1px;color:#3a78b4;white-space:nowrap;">Zbliż do obiektu</div>
<div class="abs" id="p5" style="left:568px;top:623.5px;font-size:11.3px;color:#3a78b4;white-space:nowrap;">Szczegóły (I)</div>
<div class="abs" id="p6" style="left:673px;top:623.5px;font-size:11.3px;color:#3a78b4;white-space:nowrap;">Inne</div>
<svg class="abs" style="left:644px;top:623px" width="17" height="17" viewBox="0 0 17 17"><circle cx="8.2" cy="8" r="6.2" fill="none" stroke="#5f6b3a" stroke-width="1.1"/><path d="M4.6,8 H11.8 M8.2,4.4 V11.6" stroke="#5f6b3a" stroke-width="1.2" fill="none"/></svg>
<svg class="abs" style="left:823px;top:571px" width="14" height="14" viewBox="0 0 14 14"><path d="M3,1 L7,5 L11,1 L13,3 L9,7 L13,11 L11,13 L7,9 L3,13 L1,11 L5,7 L1,3 Z" fill="#fff" stroke="#5a6670" stroke-width="1.1" stroke-linejoin="round"/></svg>


<!-- COORDS -->
<div id="coord" class="abs"></div>
<svg class="abs" style="left:0;top:585px" width="200" height="51" viewBox="0 585 200 51">
<g fill="none" stroke="#fff" stroke-opacity="0.72" stroke-width="8">
<ellipse cx="27.2" cy="613.3" rx="10.7" ry="9.3"/>
<path d="M49.6,595 V619 C49.6,623 51,623.4 55,623.2 M43.5,604 H56"/>
<ellipse cx="75" cy="613.3" rx="9.6" ry="9.3"/>
<ellipse cx="101.6" cy="613.3" rx="8.6" ry="9.3"/>
<path d="M112.6,592.4 V626.5"/>
<rect x="124" y="604" width="19.6" height="18.6" rx="5"/>
<path d="M154.2,626.5 V600.5 M154.2,613 C154.2,601 170,601 170,613 V626.5 M170,613 C170,601 186,601 186,613 V626.5"/>
</g>
</svg>
<svg class="abs" style="left:0;top:600px" width="320" height="36" viewBox="0 600 320 36">
<circle cx="17.5" cy="629.8" r="11.6" fill="#fff"/>
<circle cx="17.5" cy="629.8" r="11.6" fill="none" stroke="#2f7fb6" stroke-width="2.4" stroke-dasharray="60 12.9" transform="rotate(-62 17.5 629.8)"/>
<text x="17.6" y="633.4" text-anchor="middle" font-family="Liberation Sans, sans-serif" font-weight="bold" font-size="9.6" fill="#1a1a1a">OK</text>
<g fill="#111">
<rect x="39.4" y="616.4" width="1.7" height="8"/>
<rect x="39.4" y="622.6" width="4" height="1.9"/>
<rect x="55.3" y="622.6" width="6.6" height="1.9"/>
<rect x="77.8" y="622.6" width="16" height="1.9"/>
<rect x="112.5" y="622.6" width="7.5" height="1.9"/>
<rect x="144.4" y="622.6" width="5.6" height="1.9"/>
<rect x="156.6" y="622.6" width="6.2" height="1.9"/>
<rect x="161.2" y="616.4" width="1.7" height="8"/>
</g>
<text x="96.5" y="619.6" font-family="Liberation Sans, sans-serif" font-size="8" fill="#333" letter-spacing="-0.3">10m</text>
<rect x="88.6" y="618.6" width="1" height="1" fill="#333"/>
<text x="229" y="621" font-family="Liberation Sans, sans-serif" font-size="8.6" fill="#333">PL-1992</text>
<path d="M287.4,615.6 L291.4,619.8 L295.4,615.6" fill="none" stroke="#111" stroke-width="1.9"/>
<text x="40" y="640.4" font-family="Liberation Sans, sans-serif" font-weight="bold" font-size="10.6" fill="#222" textLength="68" lengthAdjust="spacingAndGlyphs">N: 53°01′25.8″</text>
<text x="113.2" y="640.4" font-family="Liberation Sans, sans-serif" font-weight="bold" font-size="10.6" fill="#222" textLength="68" lengthAdjust="spacingAndGlyphs">E: 23°32′36.4″</text>
<text x="187.7" y="640.4" font-family="Liberation Sans, sans-serif" font-weight="bold" font-size="10.6" fill="#222">X: 583814</text>
<text x="253.3" y="640.4" font-family="Liberation Sans, sans-serif" font-weight="bold" font-size="10.6" fill="#222">Y: 804564</text>
</svg>


<!-- WATERMARKS -->
<div id="wm" class="abs"></div>
<svg class="abs" style="left:0;top:0" width="260" height="260" viewBox="0 0 260 260">
<defs>
<clipPath id="cwhite"><rect x="0" y="0" width="260" height="65.5"/></clipPath>
<clipPath id="cdark"><rect x="0" y="65.5" width="260" height="200"/></clipPath>
<radialGradient id="glow" gradientUnits="userSpaceOnUse" cx="129.3" cy="90" r="42"><stop offset="0" stop-color="#efeab4" stop-opacity="0.7"/><stop offset="0.6" stop-color="#f3efc6" stop-opacity="0.45"/><stop offset="1" stop-color="#fbf9e6" stop-opacity="0"/></radialGradient>
</defs>
<g clip-path="url(#cwhite)"><circle cx="129.3" cy="90" r="42" fill="url(#glow)"/><path d="M128.3,66.0 L129.3,29.0 L130.3,66.0 Z M132.5,66.2 L138.5,37.8 L134.4,66.6 Z M136.6,67.1 L150.2,32.7 L138.4,67.8 Z M140.5,68.8 L155.8,44.1 L142.1,69.7 Z M144.0,71.0 L168.5,43.3 L145.4,72.2 Z M147.1,73.9 L169.9,55.9 L148.3,75.3 Z M149.6,77.2 L182.1,59.5 L150.5,78.8 Z M151.5,80.9 L179.1,71.9 L152.2,82.7 Z M152.7,84.9 L189.4,79.4 L153.1,86.8 Z M153.3,89.0 L182.3,90.0 L153.3,91.0 Z M153.1,93.2 L189.4,100.6 L152.7,95.1 Z M152.2,97.3 L179.1,108.1 L151.5,99.1 Z M150.5,101.2 L182.1,120.5 L149.6,102.8 Z M148.3,104.7 L169.9,124.1 L147.1,106.1 Z M145.4,107.8 L168.5,136.7 L144.0,109.0 Z M142.1,110.3 L155.8,135.9 L140.5,111.2 Z M138.4,112.2 L150.2,147.3 L136.6,112.9 Z M134.4,113.4 L138.5,142.2 L132.5,113.8 Z M130.3,114.0 L129.3,151.0 L128.3,114.0 Z M126.1,113.8 L120.1,142.2 L124.2,113.4 Z M122.0,112.9 L108.4,147.3 L120.2,112.2 Z M118.1,111.2 L102.8,135.9 L116.5,110.3 Z M114.6,109.0 L90.1,136.7 L113.2,107.8 Z M111.5,106.1 L88.7,124.1 L110.3,104.7 Z M109.0,102.8 L76.5,120.5 L108.1,101.2 Z M107.1,99.1 L79.5,108.1 L106.4,97.3 Z M105.9,95.1 L69.2,100.6 L105.5,93.2 Z M105.3,91.0 L76.3,90.0 L105.3,89.0 Z M105.5,86.8 L69.2,79.4 L105.9,84.9 Z M106.4,82.7 L79.5,71.9 L107.1,80.9 Z M108.1,78.8 L76.5,59.5 L109.0,77.2 Z M110.3,75.3 L88.7,55.9 L111.5,73.9 Z M113.2,72.2 L90.1,43.3 L114.6,71.0 Z M116.5,69.7 L102.8,44.1 L118.1,68.8 Z M120.2,67.8 L108.4,32.7 L122.0,67.1 Z M124.2,66.6 L120.1,37.8 L126.1,66.2 Z" fill="#ece8c0" fill-opacity="0.9"/></g>
<g clip-path="url(#cdark)"><path d="M128.3,66.0 L129.3,29.0 L130.3,66.0 Z M132.5,66.2 L138.5,37.8 L134.4,66.6 Z M136.6,67.1 L150.2,32.7 L138.4,67.8 Z M140.5,68.8 L155.8,44.1 L142.1,69.7 Z M144.0,71.0 L168.5,43.3 L145.4,72.2 Z M147.1,73.9 L169.9,55.9 L148.3,75.3 Z M149.6,77.2 L182.1,59.5 L150.5,78.8 Z M151.5,80.9 L179.1,71.9 L152.2,82.7 Z M152.7,84.9 L189.4,79.4 L153.1,86.8 Z M153.3,89.0 L182.3,90.0 L153.3,91.0 Z M153.1,93.2 L189.4,100.6 L152.7,95.1 Z M152.2,97.3 L179.1,108.1 L151.5,99.1 Z M150.5,101.2 L182.1,120.5 L149.6,102.8 Z M148.3,104.7 L169.9,124.1 L147.1,106.1 Z M145.4,107.8 L168.5,136.7 L144.0,109.0 Z M142.1,110.3 L155.8,135.9 L140.5,111.2 Z M138.4,112.2 L150.2,147.3 L136.6,112.9 Z M134.4,113.4 L138.5,142.2 L132.5,113.8 Z M130.3,114.0 L129.3,151.0 L128.3,114.0 Z M126.1,113.8 L120.1,142.2 L124.2,113.4 Z M122.0,112.9 L108.4,147.3 L120.2,112.2 Z M118.1,111.2 L102.8,135.9 L116.5,110.3 Z M114.6,109.0 L90.1,136.7 L113.2,107.8 Z M111.5,106.1 L88.7,124.1 L110.3,104.7 Z M109.0,102.8 L76.5,120.5 L108.1,101.2 Z M107.1,99.1 L79.5,108.1 L106.4,97.3 Z M105.9,95.1 L69.2,100.6 L105.5,93.2 Z M105.3,91.0 L76.3,90.0 L105.3,89.0 Z M105.5,86.8 L69.2,79.4 L105.9,84.9 Z M106.4,82.7 L79.5,71.9 L107.1,80.9 Z M108.1,78.8 L76.5,59.5 L109.0,77.2 Z M110.3,75.3 L88.7,55.9 L111.5,73.9 Z M113.2,72.2 L90.1,43.3 L114.6,71.0 Z M116.5,69.7 L102.8,44.1 L118.1,68.8 Z M120.2,67.8 L108.4,32.7 L122.0,67.1 Z M124.2,66.6 L120.1,37.8 L126.1,66.2 Z" fill="#12384e" fill-opacity="0.36"/></g>
</svg>
<svg class="abs" style="left:0;top:0" width="260" height="260" viewBox="0 0 260 260">
<text x="129.3" y="99.4" text-anchor="middle" font-family="Liberation Serif, serif" font-size="38" fill="#1c3a58" fill-opacity="0.6" stroke="#1c3a58" stroke-opacity="0.6" stroke-width="0.5">S</text>
<text x="62" y="180.6" font-family="Liberation Serif, serif" font-size="34.5" fill="#6b6257" fill-opacity="0.58" stroke="#6b6257" stroke-opacity="0.5" stroke-width="0.6" letter-spacing="1.1">STUDIO</text>
<text x="66.4" y="208" font-family="Liberation Serif, serif" font-size="19.6" fill="#8f8778" fill-opacity="0.28" letter-spacing="0.82">Nieruchomości</text>
</svg>

</body>
</html>
